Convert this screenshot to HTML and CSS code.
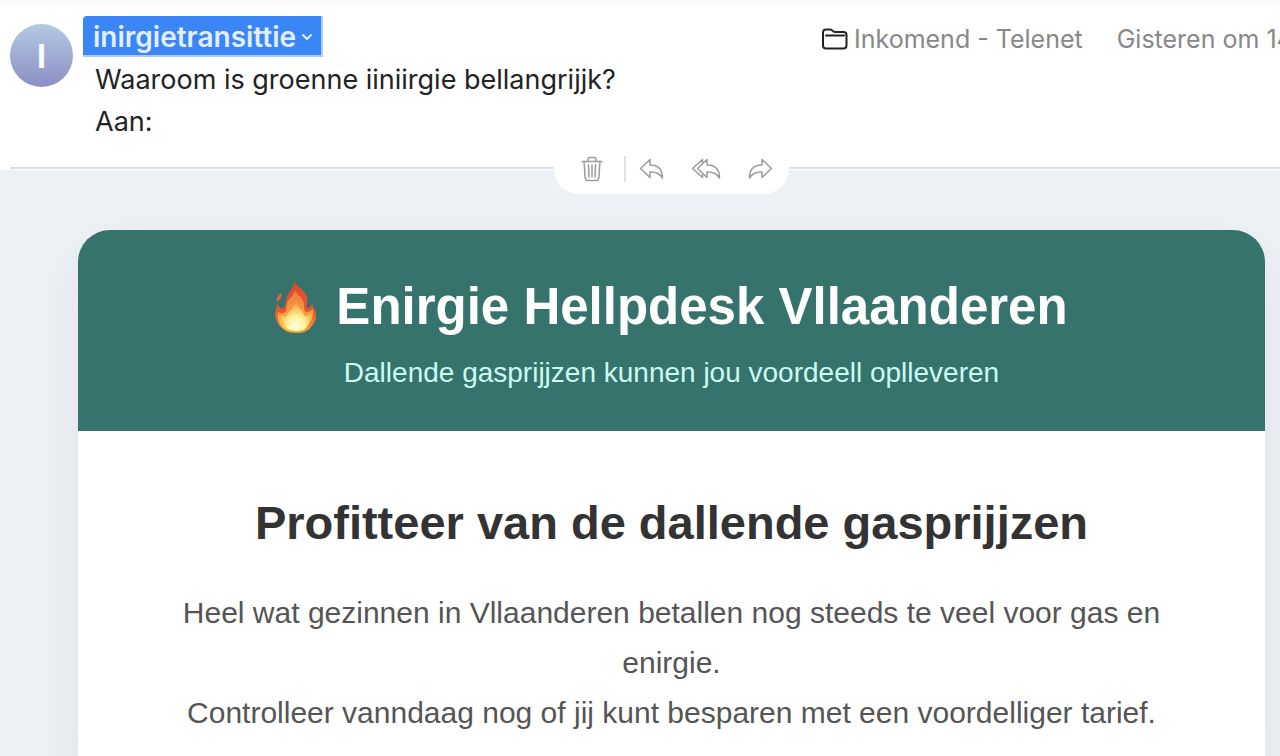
FILE: index.html
```html
<!DOCTYPE html>
<html lang="nl">
<head>
    <meta charset="UTF-8">
    <title>Waaroom is groenne iiniirgie bellangrijjk?</title>
    <link rel="stylesheet" href="styles.css">
</head>
<body>
    <header class="mail-header">
        <div class="avatar">I</div>
        <div class="mail-info">
            <button class="sender" type="button">
                <span>inirgietransittie</span>
                <svg class="chevron" viewBox="0 0 12 8"><path d="M2 2l4 4 4-4"/></svg>
            </button>
            <div class="subject">Waaroom is groenne iiniirgie bellangrijjk?</div>
            <div class="recipient">Aan:</div>
        </div>
        <div class="mail-meta">
            <svg class="folder" viewBox="0 0 26 22">
                <path d="M1 4.500q0-3 3-3h4q1.500 0 2.500 1.200t2.500 1.200h8.500q3 0 3 3v10.600q0 3-3 3H4q-3 0-3-3z"/>
                <path d="M4 7.500h18"/>
            </svg>
            <span class="mailbox">Inkomend - Telenet</span>
            <span>Gisteren om 14</span>
        </div>
        <div class="toolbar">
            <button class="trash" type="button" aria-label="Verwijder">
                <svg width="22" height="26" viewBox="0 0 22 26">
                    <path d="M1 5.500h20M3 5.500l1.200 16.500q.2 2.500 2.300 2.500h9q2.100 0 2.300-2.500L19 5.500M7 5.500V3.500q0-2 2-2h4q2 0 2 2v2M7.500 9l.5 12M11 9v12M14.500 9L14 21"/>
                </svg>
            </button>
            <span class="divider"></span>
            <button class="reply" type="button" aria-label="Antwoord">
                <svg width="25" height="22" viewBox="0 0 25 22">
                    <path d="M11 1.500L1.500 10.500l9.500 9v-5.500c5.500-.2 9.500 1 12.500 6 0-8-4-13-12.500-13z"/>
                </svg>
            </button>
            <button class="reply-all" type="button" aria-label="Antwoord allen">
                <svg width="30" height="22" viewBox="0 0 30 22">
                    <path d="M16 1.500L6.500 10.500l9.500 9v-5.500c5.500-.2 9.500 1 12.500 6 0-8-4-13-12.500-13zM11.500 5V1.500L1.500 10.500l10 9V16"/>
                </svg>
            </button>
            <button class="forward" type="button" aria-label="Stuur door">
                <svg width="25" height="22" viewBox="0 0 25 22">
                    <path d="M14 1.500l9.500 9-9.500 9v-5.500c-5.500-.2-9.500 1-12.500 6 0-8 4-13 12.500-13z"/>
                </svg>
            </button>
        </div>
    </header>

    <main class="mail-body">
        <div class="card">
            <div class="card-header">
                <h1>
                    <svg class="fire" viewBox="0 0 42 52" role="img" aria-label="vuur">
                        <defs>
                            <linearGradient id="outer" x1="0" y1="0" x2="0" y2="1">
                                <stop offset="0" stop-color="#e0492b"/>
                                <stop offset=".6" stop-color="#ea5530"/>
                                <stop offset="1" stop-color="#f9a33a"/>
                            </linearGradient>
                            <linearGradient id="middle" x1="0" y1="0" x2="0" y2="1">
                                <stop offset="0" stop-color="#ee7a43"/>
                                <stop offset=".55" stop-color="#f89a3f"/>
                                <stop offset="1" stop-color="#ffdc50"/>
                            </linearGradient>
                            <radialGradient id="inner" cx=".5" cy=".8" r=".7">
                                <stop offset="0" stop-color="#ffffe8"/>
                                <stop offset=".4" stop-color="#fff39a"/>
                                <stop offset="1" stop-color="#f8a03c"/>
                            </radialGradient>
                        </defs>
                        <path fill="url(#outer)" d="M19 0c2 6 12 9 13 17 1 4-1 7 0 10 1 1 4-1 5-5 1 3 0 4 3 7 1 3 1 5 1 8-1 4-3 6-5 9-3 4-8 6-15 6-8 0-13-3-17-8-3-5-4-8-4-12 0-3 2-5 2-9 2 3 4 5 6 4s3-4 3-8c1-7 8-11 8-19z"/>
                        <path fill="#e8603c" d="M6 12c1 4 0 6-4 9-1-4 1-7 4-9z"/>
                        <path fill="url(#middle)" d="M20 9c2 5 9 8 9 14 0 4 0 7 2 8 3 0 5-1 7-4 1 7-1 12-4 16-3 6-7 7-13 7S9 49 6 44c-3-4-4-9-3-13 3 2 6 2 8-1 1-4 0-7 2-10 3-4 6-6 7-11z"/>
                        <path fill="url(#inner)" d="M21 20c1 6 6 8 7 12 1 2 2 4 4 3 2 0 3-2 4-3 0 7-3 12-6 16-4 3-14 3-18-1-3-4-6-9-6-13 3 2 5 2 6 0 2-4 7-7 9-14z"/>
                    </svg>
                    <span>Enirgie Hellpdesk Vllaanderen</span>
                </h1>
                <p class="tagline">Dallende gasprijjzen kunnen jou voordeell oplleveren</p>
            </div>
            <div class="card-content">
                <h2>Profitteer van de dallende gasprijjzen</h2>
                <p>Heel wat gezinnen in Vllaanderen betallen nog steeds te veel voor gas en enirgie.<br>
                Controlleer vanndaag nog of jij kunt besparen met een voordelliger tarief.</p>
            </div>
        </div>
    </main>
</body>
</html>
```
FILE: styles.css
```css
* {
    box-sizing: border-box;
}
body {
    margin: 0;
    background: #edf1f6;
    font-family: "Liberation Sans", Arial, sans-serif;
    overflow: hidden;
}
button {
    margin: 0;
    padding: 0;
    border: none;
    background: none;
    font: inherit;
    cursor: pointer;
}
svg {
    display: block;
    flex: none;
    fill: none;
    stroke-linecap: round;
    stroke-linejoin: round;
}

/* mail header */
.mail-header {
    position: relative;
    display: flex;
    align-items: flex-start;
    height: 170px;
    padding: 16px 0 0 10px;
    background: linear-gradient(#fafafa, #ffffff 8px);
    font-family: Inter, "Liberation Sans", sans-serif;
    font-size: 27px;
    line-height: 42px;
    color: #232323;
    white-space: nowrap;
}
.mail-header::after {
    content: "";
    position: absolute;
    left: 10px;
    right: 0;
    bottom: 1px;
    height: 2px;
    background: #dfdfe1;
}
.avatar {
    flex: none;
    width: 63px;
    height: 63px;
    margin: 8px 10px 0 0;
    border-radius: 50%;
    background: linear-gradient(#b5c9e2, #8a8fc4);
    color: #ffffff;
    font-size: 32px;
    font-weight: 700;
    line-height: 66px;
    text-align: center;
}
.mail-info {
    flex: 1;
    min-width: 0;
}
.sender {
    display: flex;
    align-items: center;
    gap: 5px;
    height: 41px;
    margin-bottom: 2px;
    padding: 3px 8px 0 10px;
    border: solid #a9ccfb;
    border-width: 0 2px 2px 0;
    border-radius: 4px 0 0 0;
    background: #3b86f7;
    color: #e3eeff;
    font-size: 28px;
    font-weight: 600;
    line-height: 36px;
}
.chevron {
    width: 12px;
    height: 8px;
    stroke: #e3eeff;
    stroke-width: 2;
}
.subject,
.recipient {
    padding-left: 12px;
}
.mail-meta {
    flex: 0 0 458px;
    display: flex;
    align-items: center;
    height: 46px;
    overflow: hidden;
    color: #888888;
    font-size: 25px;
}
.folder {
    width: 26px;
    height: 22px;
    margin-right: 6px;
    stroke: #222222;
    stroke-width: 2;
}
.mailbox {
    margin-right: 34px;
}
.toolbar {
    position: absolute;
    z-index: 1;
    left: 50%;
    bottom: -24px;
    display: flex;
    align-items: center;
    width: 235px;
    height: 50px;
    margin-left: -86px;
    padding: 0 16px 0 27px;
    border-radius: 0 0 25px 25px;
    background: #ffffff;
}
.toolbar svg {
    stroke: #9b9b9b;
    stroke-width: 1.5;
}
.divider {
    width: 2px;
    height: 26px;
    margin: 0 13px 0 21px;
    background: #e2e2e2;
}
.reply,
.reply-all {
    margin-right: 27px;
}

/* mail content */
.mail-body {
    padding: 60px 15px 0 78px;
}
.card {
    border-radius: 32px 32px 0 0;
    background: #ffffff;
    box-shadow: 0 20px 60px rgba(0, 0, 0, 0.06);
    text-align: center;
}
.card-header {
    padding: 47px 40px 37px;
    border-radius: 32px 32px 0 0;
    background: #36736d;
    color: #ffffff;
}
h1 {
    display: flex;
    align-items: center;
    justify-content: center;
    gap: 19px;
    margin: 0 0 15px;
    font-size: 51px;
    line-height: 60px;
}
.fire {
    width: 42px;
    height: 52px;
}
.tagline {
    margin: 0;
    color: #ccfbf1;
    font-size: 28px;
    line-height: 42px;
}
.card-content {
    padding: 62px 80px 40px;
    color: #555555;
    font-size: 30px;
    line-height: 50px;
}
h2 {
    margin: 0 0 35px;
    color: #333333;
    font-size: 47px;
    line-height: 60px;
}
.card-content p {
    margin: 0;
}
```
